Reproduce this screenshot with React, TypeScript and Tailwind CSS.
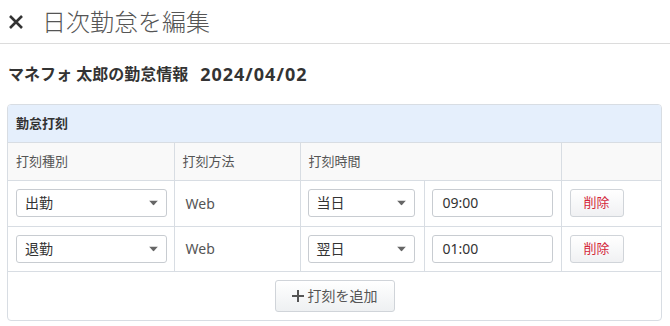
import React from 'react';

const font = { fontFamily: '"Noto Sans", "Noto Sans CJK JP", sans-serif' };

const Caret = () => (
  <svg width="9" height="5" viewBox="0 0 9 5" className="absolute right-[8px] top-1/2 -translate-y-1/2">
    <path d="M0 0h9L4.5 5z" fill="#666" />
  </svg>
);

const SelectBox: React.FC<{ value: string; width: string }> = ({ value, width }) => (
  <div className={`relative h-[28px] ${width} rounded-[3px] border border-[#c8ccd1] bg-white pl-[8px] text-[14px] leading-[26px] text-[#333]`}>
    {value}
    <Caret />
  </div>
);

const Row: React.FC<{ kind: string; day: string; time: string; h: string }> = ({ kind, day, time, h }) => (
  <tr className={`${h} border-b border-[#d8dde3]`}>
    <td className="border-r border-[#d8dde3] pl-[8px]">
      <SelectBox value={kind} width="w-[151px]" />
    </td>
    <td className="border-r border-[#d8dde3] pl-[11px] text-[14px] text-[#555]">Web</td>
    <td className="border-r border-[#d8dde3] pl-[7px]">
      <SelectBox value={day} width="w-[107px]" />
    </td>
    <td className="border-r border-[#d8dde3] pl-[7px]">
      <div className="h-[28px] w-[121px] rounded-[3px] border border-[#c8ccd1] bg-white pl-[10px] text-[14px] leading-[26px] text-[#333]">
        {time}
      </div>
    </td>
    <td className="pl-[8px]">
      <button className="h-[28px] w-[54px] rounded-[3px] border border-[#d0d4d9] bg-gradient-to-b from-white to-[#f0f1f3] text-[13px] text-[#d4263a]">
        削除
      </button>
    </td>
  </tr>
);

export default function App() {
  return (
    <div className="h-[326px] w-[670px] bg-white text-[#333]" style={font}>
      <div className="flex h-[44px] items-center border-b border-[#dcdcdc] pl-[8px]">
        <svg width="16" height="16" viewBox="0 0 16 16">
          <path d="M2 2L14 14M14 2L2 14" stroke="#333" strokeWidth="2.6" />
        </svg>
        <span className="ml-[18px] text-[24px] font-light leading-none text-[#555]">日次勤怠を編集</span>
      </div>

      <div className="flex h-[60px] items-center pl-[8px] text-[16px] font-bold text-[#333]">
        マネフォ 太郎の勤怠情報
        <span className="ml-[12px] text-[18px] tracking-[1px]">2024/04/02</span>
      </div>

      <div className="ml-[7px] w-[655px] overflow-hidden rounded-[4px] border border-[#d8dde3]">
        <div className="flex h-[38px] items-center border-b border-[#d8dde3] bg-[#e5effc] pl-[8px] text-[13px] font-bold text-[#333]">
          勤怠打刻
        </div>
        <table className="w-full border-collapse">
          <colgroup>
            <col className="w-[166px]" />
            <col className="w-[126px]" />
            <col className="w-[124px]" />
            <col className="w-[137px]" />
            <col />
          </colgroup>
          <tbody>
            <tr className="h-[37px] border-b border-[#d8dde3] bg-[#f9f9f9] text-[13px] text-[#555]">
              <td className="border-r border-[#d8dde3] pl-[8px]">打刻種別</td>
              <td className="border-r border-[#d8dde3] pl-[8px]">打刻方法</td>
              <td colSpan={2} className="border-r border-[#d8dde3] pl-[8px]">打刻時間</td>
              <td></td>
            </tr>
            <Row kind="出勤" day="当日" time="09:00" h="h-[46px]" />
            <Row kind="退勤" day="翌日" time="01:00" h="h-[45px]" />
          </tbody>
        </table>
        <div className="flex h-[48px] items-center justify-center">
          <button className="flex h-[32px] w-[120px] items-center justify-center gap-[4px] rounded-[3px] border border-[#d0d4d9] bg-gradient-to-b from-white to-[#eef0f2] text-[14px] text-[#555]">
            <svg width="12" height="12" viewBox="0 0 12 12">
              <path d="M6 0v12M0 6h12" stroke="#555" strokeWidth="2" />
            </svg>
            打刻を追加
          </button>
        </div>
      </div>
    </div>
  );
}
